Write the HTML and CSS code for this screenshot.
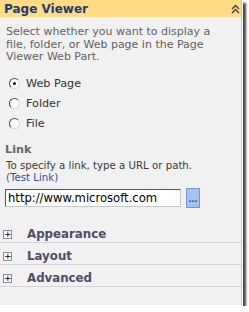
FILE: index.html
```html
<!DOCTYPE html>
<html lang="en">
<head>
    <meta charset="UTF-8">
    <title>Page Viewer</title>
    <link rel="stylesheet" href="styles.css">
</head>
<body>

<div class="frame">
    <div class="pane">
        <!-- Tool part header -->
        <div class="pane-header">
            <span class="pane-title">Page Viewer</span>
            <svg class="collapse" width="9" height="10" viewBox="0 0 9 10">
                <polyline points="1,5 4.5,1.5 8,5" fill="none" stroke="#3c3c3c" stroke-width="1.3"/>
                <polyline points="1,9 4.5,5.5 8,9" fill="none" stroke="#3c3c3c" stroke-width="1.3"/>
            </svg>
        </div>

        <p class="intro">Select whether you want to display a file, folder, or Web page in the Page Viewer Web Part.</p>

        <!-- Content type -->
        <div class="choices">
            <label class="choice"><span class="radio checked"></span>Web Page</label>
            <label class="choice"><span class="radio"></span>Folder</label>
            <label class="choice"><span class="radio"></span>File</label>
        </div>

        <!-- Link field -->
        <div class="field">
            <div class="field-title">Link</div>
            <div class="field-help">To specify a link, type a URL or path.<br><a href="#" class="test-link">(Test Link)</a></div>
            <div class="field-row">
                <input type="text" class="url-input" value="http://www.microsoft.com">
                <button class="browse">...</button>
            </div>
        </div>

        <!-- Collapsed groups -->
        <div class="groups">
            <div class="group"><span class="plus">+</span>Appearance</div>
            <div class="group"><span class="plus">+</span>Layout</div>
            <div class="group"><span class="plus">+</span>Advanced</div>
        </div>
    </div>
</div>

</body>
</html>
```

FILE: styles.css
```css
/* Global Styles */
body {
    margin: 0;
    padding: 0;
    background-color: #ffffff;
    font-family: "DejaVu Sans", Verdana, sans-serif;
    font-size: 10px;
}

.frame {
    display: inline-block;
    padding: 0 1px 1px 0;
    background-color: #ffffff;
    box-shadow: 3px 3px 2px rgba(40, 40, 40, 0.85);
}

.pane {
    width: 241px;
    height: 305px;
    background-color: #f1f1f1;
    border-right: 1px solid #a9c8ec;
    display: flex;
    flex-direction: column;
}

/* Header */
.pane-header {
    height: 17px;
    background-color: #ffdb86;
    display: flex;
    align-items: center;
    justify-content: space-between;
    padding: 0 1px 0 4px;
}

.pane-title {
    font-weight: bold;
    font-size: 12px;
    color: #1d3a6e;
}

.collapse {
    display: block;
}

.intro {
    margin: 9px 0 0 0;
    padding: 0 14px 0 6px;
    font-size: 11px;
    line-height: 12.5px;
    color: #616161;
}

/* Radio choices */
.choices {
    margin-top: 10px;
    display: flex;
    flex-direction: column;
}

.choice {
    height: 20px;
    line-height: 20px;
    display: flex;
    align-items: center;
    padding-left: 9px;
    gap: 6px;
    font-size: 11.2px;
    color: #333333;
}

.radio {
    width: 9px;
    height: 9px;
    border-radius: 50%;
    border: 1px solid;
    border-color: #4a4a4a #d8d8d8 #d8d8d8 #4a4a4a;
    background-color: #ffffff;
    display: flex;
    align-items: center;
    justify-content: center;
}

.radio.checked::after {
    content: "";
    width: 3px;
    height: 3px;
    border-radius: 50%;
    background-color: #111111;
}

/* Link field */
.field {
    margin-top: 9px;
    padding: 0 5px 0 6px;
}

.field-title {
    margin-left: -1px;
    font-weight: bold;
    font-size: 11.2px;
    line-height: 13px;
    color: #666666;
}

.field-help {
    margin-top: 4px;
    font-size: 10.2px;
    line-height: 12.5px;
    color: #3a3a3a;
}

.test-link {
    color: #2b4f9c;
    text-decoration: none;
}

.field-row {
    margin-top: 3px;
    margin-left: -1px;
    display: flex;
    align-items: center;
    gap: 5px;
}

.url-input {
    box-sizing: border-box;
    width: 176px;
    height: 18px;
    margin: 0;
    padding: 0 2px;
    border: 1px solid;
    border-color: #555555 #c8c8c8 #c8c8c8 #555555;
    font-family: "DejaVu Sans", Verdana, sans-serif;
    font-size: 11.6px;
    color: #000000;
    background-color: #ffffff;
}

.browse {
    box-sizing: border-box;
    width: 14px;
    height: 20px;
    margin: 0;
    padding: 0 0 3px 0;
    border: 1px solid #6e98d8;
    background-color: #a6c2f0;
    color: #34427e;
    font-size: 8px;
    font-weight: bold;
    font-family: "DejaVu Sans", Verdana, sans-serif;
    display: flex;
    align-items: flex-end;
    justify-content: center;
}

/* Collapsed groups */
.groups {
    margin-top: 13px;
}

.group {
    height: 15px;
    padding-top: 6px;
    line-height: 13px;
    border-bottom: 1px solid #d4d4d4;
    display: flex;
    align-items: center;
    gap: 15px;
    padding-left: 3px;
    font-weight: bold;
    font-size: 11.8px;
    color: #4f4c6a;
}

.plus {
    box-sizing: border-box;
    width: 9px;
    height: 9px;
    border: 1px solid #8c8c8c;
    background-color: #ffffff;
    color: #000000;
    font-size: 9px;
    line-height: 7px;
    font-weight: normal;
    text-align: center;
}
```
